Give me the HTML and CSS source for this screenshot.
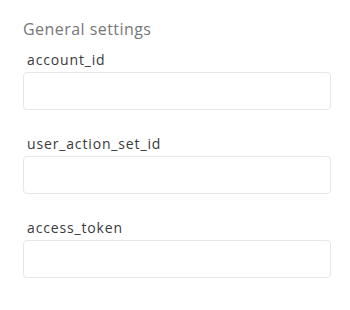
FILE: index.html
```html
<!DOCTYPE html>
<html>
<head>
<meta charset="utf-8">
<link rel="stylesheet" href="styles.css">
</head>
<body>
<div class="panel">
  <h2 class="title">General settings</h2>
  <div class="field">
    <label class="label">account_id</label>
    <input class="input" type="text">
  </div>
  <div class="field">
    <label class="label">user_action_set_id</label>
    <input class="input" type="text">
  </div>
  <div class="field">
    <label class="label">access_token</label>
    <input class="input" type="text">
  </div>
</div>
</body>
</html>
```
FILE: styles.css
```css
html, body {
  margin: 0;
  padding: 0;
  background: #fff;
}
body {
  font-family: "Open Sans", "Noto Sans", sans-serif;
}
.panel {
  padding: 19px 19px 0 23px;
  display: flex;
  flex-direction: column;
}
.title {
  margin: 0 0 12px 0;
  font-size: 16px;
  font-weight: 400;
  color: #777;
  line-height: 20px;
  letter-spacing: 0.45px;
}
.field {
  display: flex;
  flex-direction: column;
  margin-bottom: 25px;
}
.label {
  font-size: 14px;
  color: #3a3a3a;
  line-height: 18px;
  padding-left: 4px;
  margin-bottom: 3px;
  letter-spacing: 0.85px;
}
.input {
  box-sizing: border-box;
  width: 308px;
  height: 38px;
  border: 1px solid #e6e6ec;
  border-radius: 4px;
  background: #fff;
  margin: 0;
  padding: 0 8px;
  outline: none;
}
```
